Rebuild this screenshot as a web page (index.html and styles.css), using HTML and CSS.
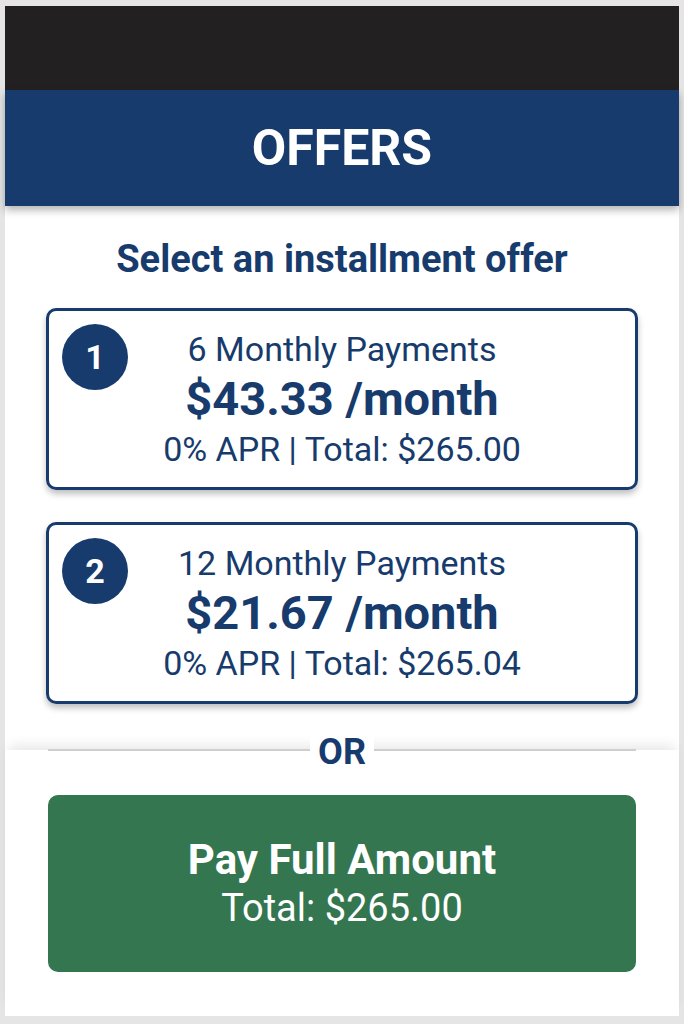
FILE: index.html
```html
<!DOCTYPE html>
<html lang="en">
<head>
  <meta charset="UTF-8">
  <title>Offers</title>
  <link rel="stylesheet" href="styles.css">
</head>
<body>

  <div class="screen">
    <div class="status-bar"></div>

    <header class="top-bar">
      <h1>OFFERS</h1>
    </header>

    <section class="offers">
      <h2>Select an installment offer</h2>

      <div class="offer-card">
        <span class="offer-num">1</span>
        <div class="offer-term">6 Monthly Payments</div>
        <div class="offer-price">$43.33 /month</div>
        <div class="offer-detail">0% APR | Total: $265.00</div>
      </div>

      <div class="offer-card">
        <span class="offer-num">2</span>
        <div class="offer-term">12 Monthly Payments</div>
        <div class="offer-price">$21.67 /month</div>
        <div class="offer-detail">0% APR | Total: $265.04</div>
      </div>
    </section>

    <section class="pay-section">
      <div class="divider"><span>OR</span></div>
      <button type="button" class="pay-full">
        <span class="pay-title">Pay Full Amount</span>
        <span class="pay-total">Total: $265.00</span>
      </button>
    </section>
  </div>

</body>
</html>
```

FILE: styles.css
```css
body {
  margin: 0;
  padding: 6px 5px 8px;
  background-color: #e5e5e5;
  font-family: Roboto, "Liberation Sans", Arial, sans-serif;
  color: #173b6c;
}
.screen {
  width: 674px;
  height: 1010px;
  background-color: #fff;
  display: flex;
  flex-direction: column;
}
.status-bar {
  height: 84px;
  background-color: #222020;
}
.top-bar {
  height: 116px;
  background-color: #173b6c;
  display: flex;
  align-items: center;
  justify-content: center;
  box-shadow: 0 4px 8px rgba(0, 0, 0, 0.3);
  position: relative;
  z-index: 1;
}
.top-bar h1 {
  margin: 0;
  color: #fff;
  font-size: 50px;
  font-weight: 700;
}
.offers {
  flex: 1;
  padding: 0 41px;
}
.offers h2 {
  margin: 33px 0 29px;
  text-align: center;
  font-size: 38px;
  font-weight: 700;
  line-height: 40px;
}
.offer-card {
  position: relative;
  height: 176px;
  border: 3px solid #173b6c;
  border-radius: 10px;
  box-shadow: 0 4px 6px rgba(0, 0, 0, 0.25);
  margin-bottom: 32px;
  display: flex;
  flex-direction: column;
  align-items: center;
  justify-content: center;
  text-align: center;
}
.offer-num {
  position: absolute;
  left: 13px;
  top: 13px;
  width: 66px;
  height: 66px;
  border-radius: 50%;
  background-color: #173b6c;
  color: #fff;
  font-size: 34px;
  font-weight: 700;
  display: flex;
  align-items: center;
  justify-content: center;
}
.offer-term {
  font-size: 34px;
  line-height: 50px;
}
.offer-price {
  font-size: 47px;
  font-weight: 700;
  line-height: 50px;
}
.offer-detail {
  font-size: 34px;
  line-height: 50px;
}
.pay-section {
  height: 266px;
  padding: 0 43px;
  box-shadow: 0 -8px 12px -4px rgba(0, 0, 0, 0.1);
  position: relative;
}
.divider {
  display: flex;
  align-items: center;
  height: 32px;
  margin-top: -16px;
}
.divider::before,
.divider::after {
  content: "";
  flex: 1;
  height: 2px;
  background-color: #cfcfcf;
}
.divider span {
  background-color: #fff;
  padding: 4px 8px 0;
  font-size: 36px;
  font-weight: 700;
  line-height: 32px;
}
.pay-full {
  width: 100%;
  height: 177px;
  margin-top: 29px;
  border: none;
  border-radius: 10px;
  background-color: #34764f;
  color: #fff;
  font-family: inherit;
  display: flex;
  flex-direction: column;
  align-items: center;
  justify-content: center;
}
.pay-title {
  font-size: 42px;
  font-weight: 700;
  line-height: 48px;
}
.pay-total {
  font-size: 38px;
  line-height: 48px;
}
```
